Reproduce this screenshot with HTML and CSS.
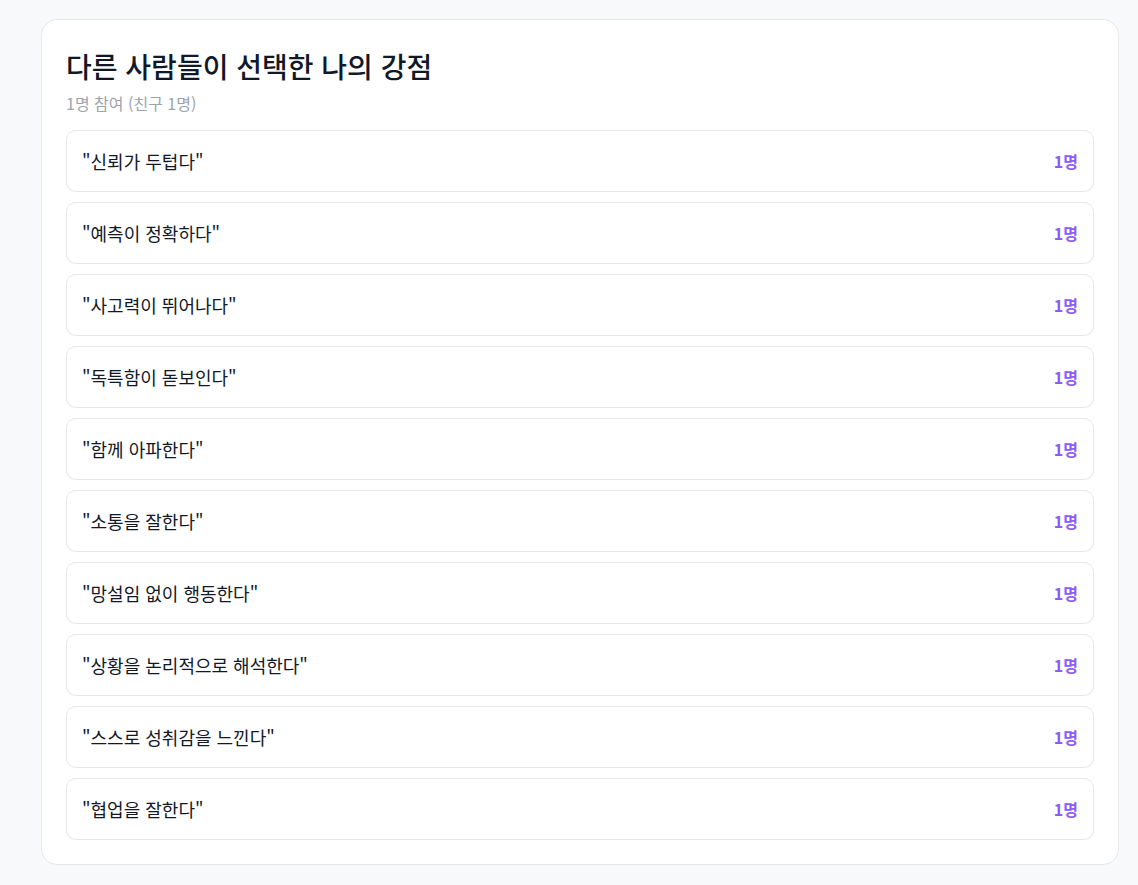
FILE: index.html
```html
<!DOCTYPE html>
<html lang="ko">
<head>
    <meta charset="UTF-8">
    <meta name="viewport" content="width=device-width, initial-scale=1.0">
    <title>나의 강점</title>
    <link rel="stylesheet" href="styles.css">
</head>
<body>
<div class="card">
    <h2 class="card-title">다른 사람들이 선택한 나의 강점</h2>
    <p class="card-sub">1명 참여 (친구 1명)</p>

    <ul class="strength-list">
        <li class="strength-item"><span class="strength-name">"신뢰가 두텁다"</span><span class="strength-count">1명</span></li>
        <li class="strength-item"><span class="strength-name">"예측이 정확하다"</span><span class="strength-count">1명</span></li>
        <li class="strength-item"><span class="strength-name">"사고력이 뛰어나다"</span><span class="strength-count">1명</span></li>
        <li class="strength-item"><span class="strength-name">"독특함이 돋보인다"</span><span class="strength-count">1명</span></li>
        <li class="strength-item"><span class="strength-name">"함께 아파한다"</span><span class="strength-count">1명</span></li>
        <li class="strength-item"><span class="strength-name">"소통을 잘한다"</span><span class="strength-count">1명</span></li>
        <li class="strength-item"><span class="strength-name">"망설임 없이 행동한다"</span><span class="strength-count">1명</span></li>
        <li class="strength-item"><span class="strength-name">"상황을 논리적으로 해석한다"</span><span class="strength-count">1명</span></li>
        <li class="strength-item"><span class="strength-name">"스스로 성취감을 느낀다"</span><span class="strength-count">1명</span></li>
        <li class="strength-item"><span class="strength-name">"협업을 잘한다"</span><span class="strength-count">1명</span></li>
    </ul>
</div>
</body>
</html>
```

FILE: styles.css
```css
body {
    margin: 0;
    padding: 19px 19px 20px 41px;
    background-color: #f8f9fb;
    font-family: "Noto Sans CJK KR", "Noto Sans", sans-serif;
    color: #111827;
}

.card {
    background-color: #fff;
    border: 1px solid #e5e7eb;
    border-radius: 16px;
    padding: 28px 24px 24px;
}

.card-title {
    margin: 0;
    font-size: 28px;
    line-height: 36px;
    font-weight: 500;
    color: #111827;
}
.card-sub {
    margin: 8px 0 16px;
    font-size: 16px;
    line-height: 22px;
    color: #9ca3af;
}

.strength-list {
    list-style: none;
    margin: 0;
    padding: 0;
    display: flex;
    flex-direction: column;
    gap: 10px;
}
.strength-item {
    display: flex;
    align-items: center;
    justify-content: space-between;
    height: 60px;
    padding: 0 15px;
    border: 1px solid #e5e7eb;
    border-radius: 10px;
}
.strength-name {
    font-size: 18px;
    color: #111827;
}
.strength-count {
    font-size: 16px;
    font-weight: 700;
    color: #8b5cf6;
}
```
